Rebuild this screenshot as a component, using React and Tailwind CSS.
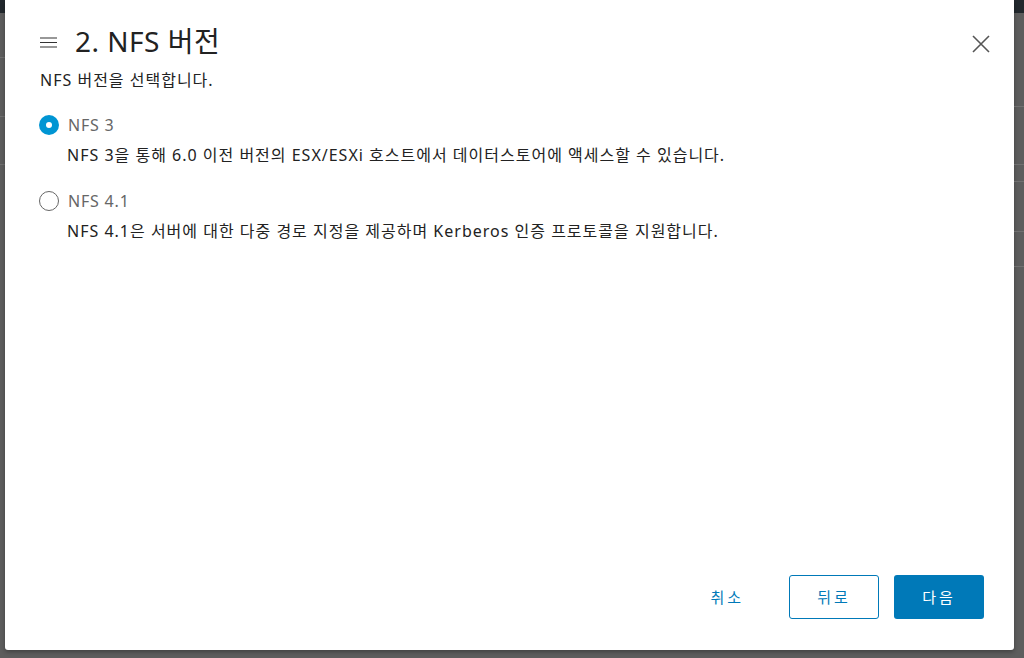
const font = { fontFamily: '"Noto Sans", "Noto Sans CJK KR", sans-serif' };

function Radio({ checked }) {
  if (checked) {
    return (
      <span className="flex h-[20px] w-[20px] shrink-0 items-center justify-center rounded-full bg-[#0095d3]">
        <span className="h-[6px] w-[6px] rounded-full bg-white" />
      </span>
    );
  }
  return <span className="h-[20px] w-[20px] shrink-0 rounded-full border border-[#666]" />;
}

const options = [
  {
    label: 'NFS 3',
    desc: 'NFS 3을 통해 6.0 이전 버전의 ESX/ESXi 호스트에서 데이터스토어에 액세스할 수 있습니다.',
    checked: true,
  },
  {
    label: 'NFS 4.1',
    desc: 'NFS 4.1은 서버에 대한 다중 경로 지정을 제공하며 Kerberos 인증 프로토콜을 지원합니다.',
    checked: false,
  },
];

export default function App() {
  return (
    <div className="flex h-[658px] w-[1024px] flex-col overflow-hidden bg-[#5d5d5d]" style={font}>
      <div className="h-[13px] w-full shrink-0 bg-[#22282d]" />
      <div className="-mt-[13px] flex flex-1">
        {/* Backdrop strip on the left */}
        <div className="flex w-[5px] shrink-0 flex-col pt-[13px]">
          <div className="h-[45px] border-b border-[#707070]" />
          <div className="h-[59px] border-b border-[#707070]" />
          <div className="h-[48px] border-b border-[#707070]" />
        </div>
        {/* Modal */}
        <div className="flex h-[650px] w-[1009px] flex-col rounded-b-[3px] bg-white shadow-[0_2px_4px_rgba(0,0,0,0.3)]">
          {/* Header */}
          <div className="flex items-center pl-[35px] pr-[24px] pt-[25px]">
            <svg width="17" height="11" viewBox="0 0 17 11" className="mr-[18px] mt-[2px]">
              <path d="M0 1h17M0 5.5h17M0 10h17" stroke="#333" strokeWidth="1.2" />
            </svg>
            <h1 className="flex-1 text-[28px] leading-[32px] tracking-[0.5px] text-[#222]">2. NFS 버전</h1>
            <svg width="18" height="18" viewBox="0 0 18 18" className="mt-[5px]">
              <path d="M1 1l16 16M17 1L1 17" stroke="#555" strokeWidth="1.6" />
            </svg>
          </div>
          <p className="mt-[12px] pl-[35px] text-[16px] leading-[22px] tracking-[1px] text-[#222]">
            NFS 버전을 선택합니다.
          </p>

          {/* Options */}
          <div className="mt-[23px] flex flex-col gap-[24px] pl-[34px]">
            {options.map((o) => (
              <div key={o.label} className="flex flex-col">
                <div className="flex items-center gap-[9px]">
                  <Radio checked={o.checked} />
                  <span className="text-[16px] leading-[22px] tracking-[0.8px] text-[#666]">{o.label}</span>
                </div>
                <p className="mt-[8px] pl-[28px] text-[16px] leading-[22px] tracking-[1px] text-[#222]">{o.desc}</p>
              </div>
            ))}
          </div>

          <div className="flex-1" />

          {/* Footer */}
          <div className="flex items-center justify-end gap-[15px] pb-[31px] pr-[30px]">
            <button className="mr-[15px] h-[44px] px-[15px] text-[15px] tracking-[3px] text-[#0079b8]">취소</button>
            <button className="h-[44px] w-[90px] rounded-[3px] border border-[#0079b8] text-[15px] tracking-[3px] text-[#0079b8]">
              뒤로
            </button>
            <button className="h-[44px] w-[90px] rounded-[3px] bg-[#0079b8] text-[15px] tracking-[3px] text-white">
              다음
            </button>
          </div>
        </div>
        {/* Backdrop content on the right */}
        <div className="flex flex-1 flex-col pt-[13px]">
          <div className="h-[94px] border-b border-[#707070]" />
          <div className="h-[58px] border-b border-[#707070]" />
          <div className="h-[17px] border-b border-[#707070]" />
          <div className="h-[50px] border-b border-[#707070]" />
          <div className="h-[35px] border-b border-[#707070]" />
        </div>
      </div>
    </div>
  );
}
